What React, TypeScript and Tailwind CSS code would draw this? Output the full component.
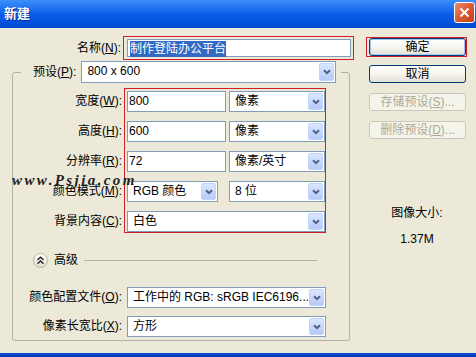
import React from "react";

function Chevron() {
  return (
    <svg width="8" height="6" viewBox="0 0 8 6">
      <path d="M1 1.2 L4 4.2 L7 1.2" stroke="#4D6185" strokeWidth="2" fill="none" />
    </svg>
  );
}

function Select({ text, className }: { text: string; className: string }) {
  return (
    <div className={"flex h-[21px] border border-[#7F9DB9] bg-white " + className}>
      <span className="flex-1 pl-[5px] leading-[19px] whitespace-nowrap overflow-hidden">{text}</span>
      <span className="w-[15px] m-[1px] rounded-[2px] border border-[#C3D3FD] bg-gradient-to-b from-[#DCE7FF] to-[#B6CAF7] flex items-center justify-center">
        <Chevron />
      </span>
    </div>
  );
}

function Input({ text }: { text: string }) {
  return (
    <div className="h-[21px] w-[99px] border border-[#7F9DB9] bg-white pl-[1px] leading-[19px]">{text}</div>
  );
}

function Label({ main, k, className }: { main: string; k: string; className: string }) {
  return (
    <div className={"text-right whitespace-nowrap " + className}>
      {main}(<u className="underline-offset-[1px]">{k}</u>):
    </div>
  );
}

function Button({ children, disabled }: { children: React.ReactNode; disabled?: boolean }) {
  if (disabled) {
    return (
      <div className="h-[18px] w-[97px] rounded-[3px] border border-[#CAC8BB] bg-[#F5F4EA] text-[#ACA899] flex items-center justify-center leading-[16px]">
        {children}
      </div>
    );
  }
  return (
    <div className="h-[18px] w-[97px] rounded-[3px] border border-[#003C74] bg-gradient-to-b from-white via-[#F6F5F0] to-[#E3E1D6] flex items-center justify-center leading-[16px]">
      {children}
    </div>
  );
}

export default function App() {
  return (
    <div className="relative w-[476px] h-[357px] overflow-hidden bg-[#ECE9D8] flex flex-col text-[12px] text-black font-['Liberation_Sans','Noto_Sans_CJK_SC',sans-serif]">
      {/* Title bar */}
      <div className="h-[28px] flex items-start justify-between pl-[4px] pr-[1px] bg-gradient-to-b from-[#3D8EF8] via-[#0A5EEA] to-[#0349D3]">
        <span className="mt-[6px] text-white font-bold text-[13px] leading-[16px] [text-shadow:1px_1px_0_#0B2A8A]">新建</span>
        <div className="mt-[2px] w-[21px] h-[21px] rounded-[3px] border border-white bg-gradient-to-br from-[#EC8A6A] via-[#DA5A32] to-[#C2401B] flex items-center justify-center">
          <svg width="11" height="11" viewBox="0 0 11 11">
            <path d="M1.5 1.5 L9.5 9.5 M9.5 1.5 L1.5 9.5" stroke="white" strokeWidth="2" />
          </svg>
        </div>
      </div>

      {/* Body */}
      <div className="flex-1 flex">
        {/* Left column */}
        <div className="w-[358px] flex flex-col">
          <div className="mt-[8px] flex items-center">
            <Label main="名称" k="N" className="w-[121px] leading-[16px]" />
            <div className="ml-[2px] border border-[#D21F26] pl-[3px] pr-[2px] pt-[2px] pb-[2px]">
              <div className="h-[18px] w-[224px] border border-[#7F9DB9] bg-white pl-[2px]">
                <span className="inline-block h-[16px] leading-[16px] bg-[#316AC5] text-white">制作登陆办公平台</span>
              </div>
            </div>
          </div>

          <fieldset className="mt-[1px] ml-[12px] w-[338px] border border-[#B4B1A2] rounded-[3px] pb-[3px]">
            <legend className="ml-[8px] pl-[12px] pr-[5px] flex items-center">
              <Label main="预设" k="P" className="leading-[16px]" />
              <Select text="800 x 600" className="ml-[5px] w-[255px] h-[22px]" />
            </legend>

            <div className="mt-[5px] flex">
              <div className="w-[109px] pt-[3px] flex flex-col gap-[9px]">
                <Label main="宽度" k="W" className="h-[21px] leading-[21px]" />
                <Label main="高度" k="H" className="h-[21px] leading-[21px]" />
                <Label main="分辨率" k="R" className="h-[21px] leading-[21px]" />
                <Label main="颜色模式" k="M" className="h-[21px] leading-[21px]" />
                <Label main="背景内容" k="C" className="h-[21px] leading-[21px]" />
              </div>
              <div className="ml-[2px] border border-[#D21F26] pl-[2px] pt-[2px] w-[202px] flex flex-col gap-[9px]">
                <div className="flex justify-between">
                  <Input text="800" />
                  <Select text="像素" className="w-[96px]" />
                </div>
                <div className="flex justify-between">
                  <Input text="600" />
                  <Select text="像素" className="w-[96px]" />
                </div>
                <div className="flex justify-between">
                  <Input text="72" />
                  <Select text="像素/英寸" className="w-[96px]" />
                </div>
                <div className="flex justify-between">
                  <Select text="RGB 颜色" className="w-[91px]" />
                  <Select text="8 位" className="w-[96px]" />
                </div>
                <Select text="白色" className="w-[198px]" />
              </div>
            </div>

            <div className="mt-[20px] h-[15px] flex items-center">
              <div className="ml-[20px] w-[15px] h-[15px] rounded-full border border-[#B8B5A5] bg-gradient-to-b from-white to-[#E2DFD2] flex items-center justify-center">
                <svg width="9" height="9" viewBox="0 0 9 9">
                  <path d="M1.5 4 L4.5 1.3 L7.5 4 M1.5 7.7 L4.5 5 L7.5 7.7" stroke="#222" strokeWidth="1.4" fill="none" />
                </svg>
              </div>
              <span className="ml-[6px] leading-[15px]">高级</span>
              <div className="ml-[6px] mr-[32px] flex-1 h-[1px] bg-[#B4B1A2]" />
            </div>

            <div className="mt-[19px] flex items-center">
              <Label main="颜色配置文件" k="O" className="w-[109px] leading-[21px]" />
              <Select text="工作中的 RGB: sRGB IEC6196..." className="ml-[5px] w-[199px]" />
            </div>
            <div className="mt-[8px] flex items-center">
              <Label main="像素长宽比" k="X" className="w-[109px] leading-[21px]" />
              <Select text="方形" className="ml-[5px] w-[199px]" />
            </div>
          </fieldset>
        </div>

        {/* Right column */}
        <div className="flex-1 flex flex-col">
          <div className="pl-[8px] mt-[9px] flex flex-col items-start">
            <div className="border border-[#D21F26] pl-[2px]">
              <div className="h-[18px] w-[97px] rounded-[3px] border border-[#003C74] bg-gradient-to-b from-white via-[#F6F5F0] to-[#E3E1D6] shadow-[inset_0_0_0_1px_#A6C4F7] flex items-center justify-center leading-[16px]">
                确定
              </div>
            </div>
            <div className="mt-[8px] ml-[3px]">
              <Button>取消</Button>
            </div>
            <div className="mt-[10px] ml-[3px]">
              <Button disabled>
                存储预设(<u>S</u>)...
              </Button>
            </div>
            <div className="mt-[10px] ml-[3px]">
              <Button disabled>
                删除预设(<u>D</u>)...
              </Button>
            </div>
          </div>
          <div className="mt-[67px] text-center leading-[14px]">图像大小:</div>
          <div className="mt-[12px] text-center leading-[14px]">1.37M</div>
        </div>
      </div>

      {/* bottom frame */}
      <div className="h-[4px] bg-gradient-to-b from-[#0A4FD6] to-[#0336B5]" />

      {/* watermark */}
      <div className="absolute left-[12px] top-[172px] font-['Liberation_Serif',serif] italic font-bold text-[15px] tracking-[2.4px] text-[#222] leading-[16px]">
        www.Psjia.com
      </div>
    </div>
  );
}
